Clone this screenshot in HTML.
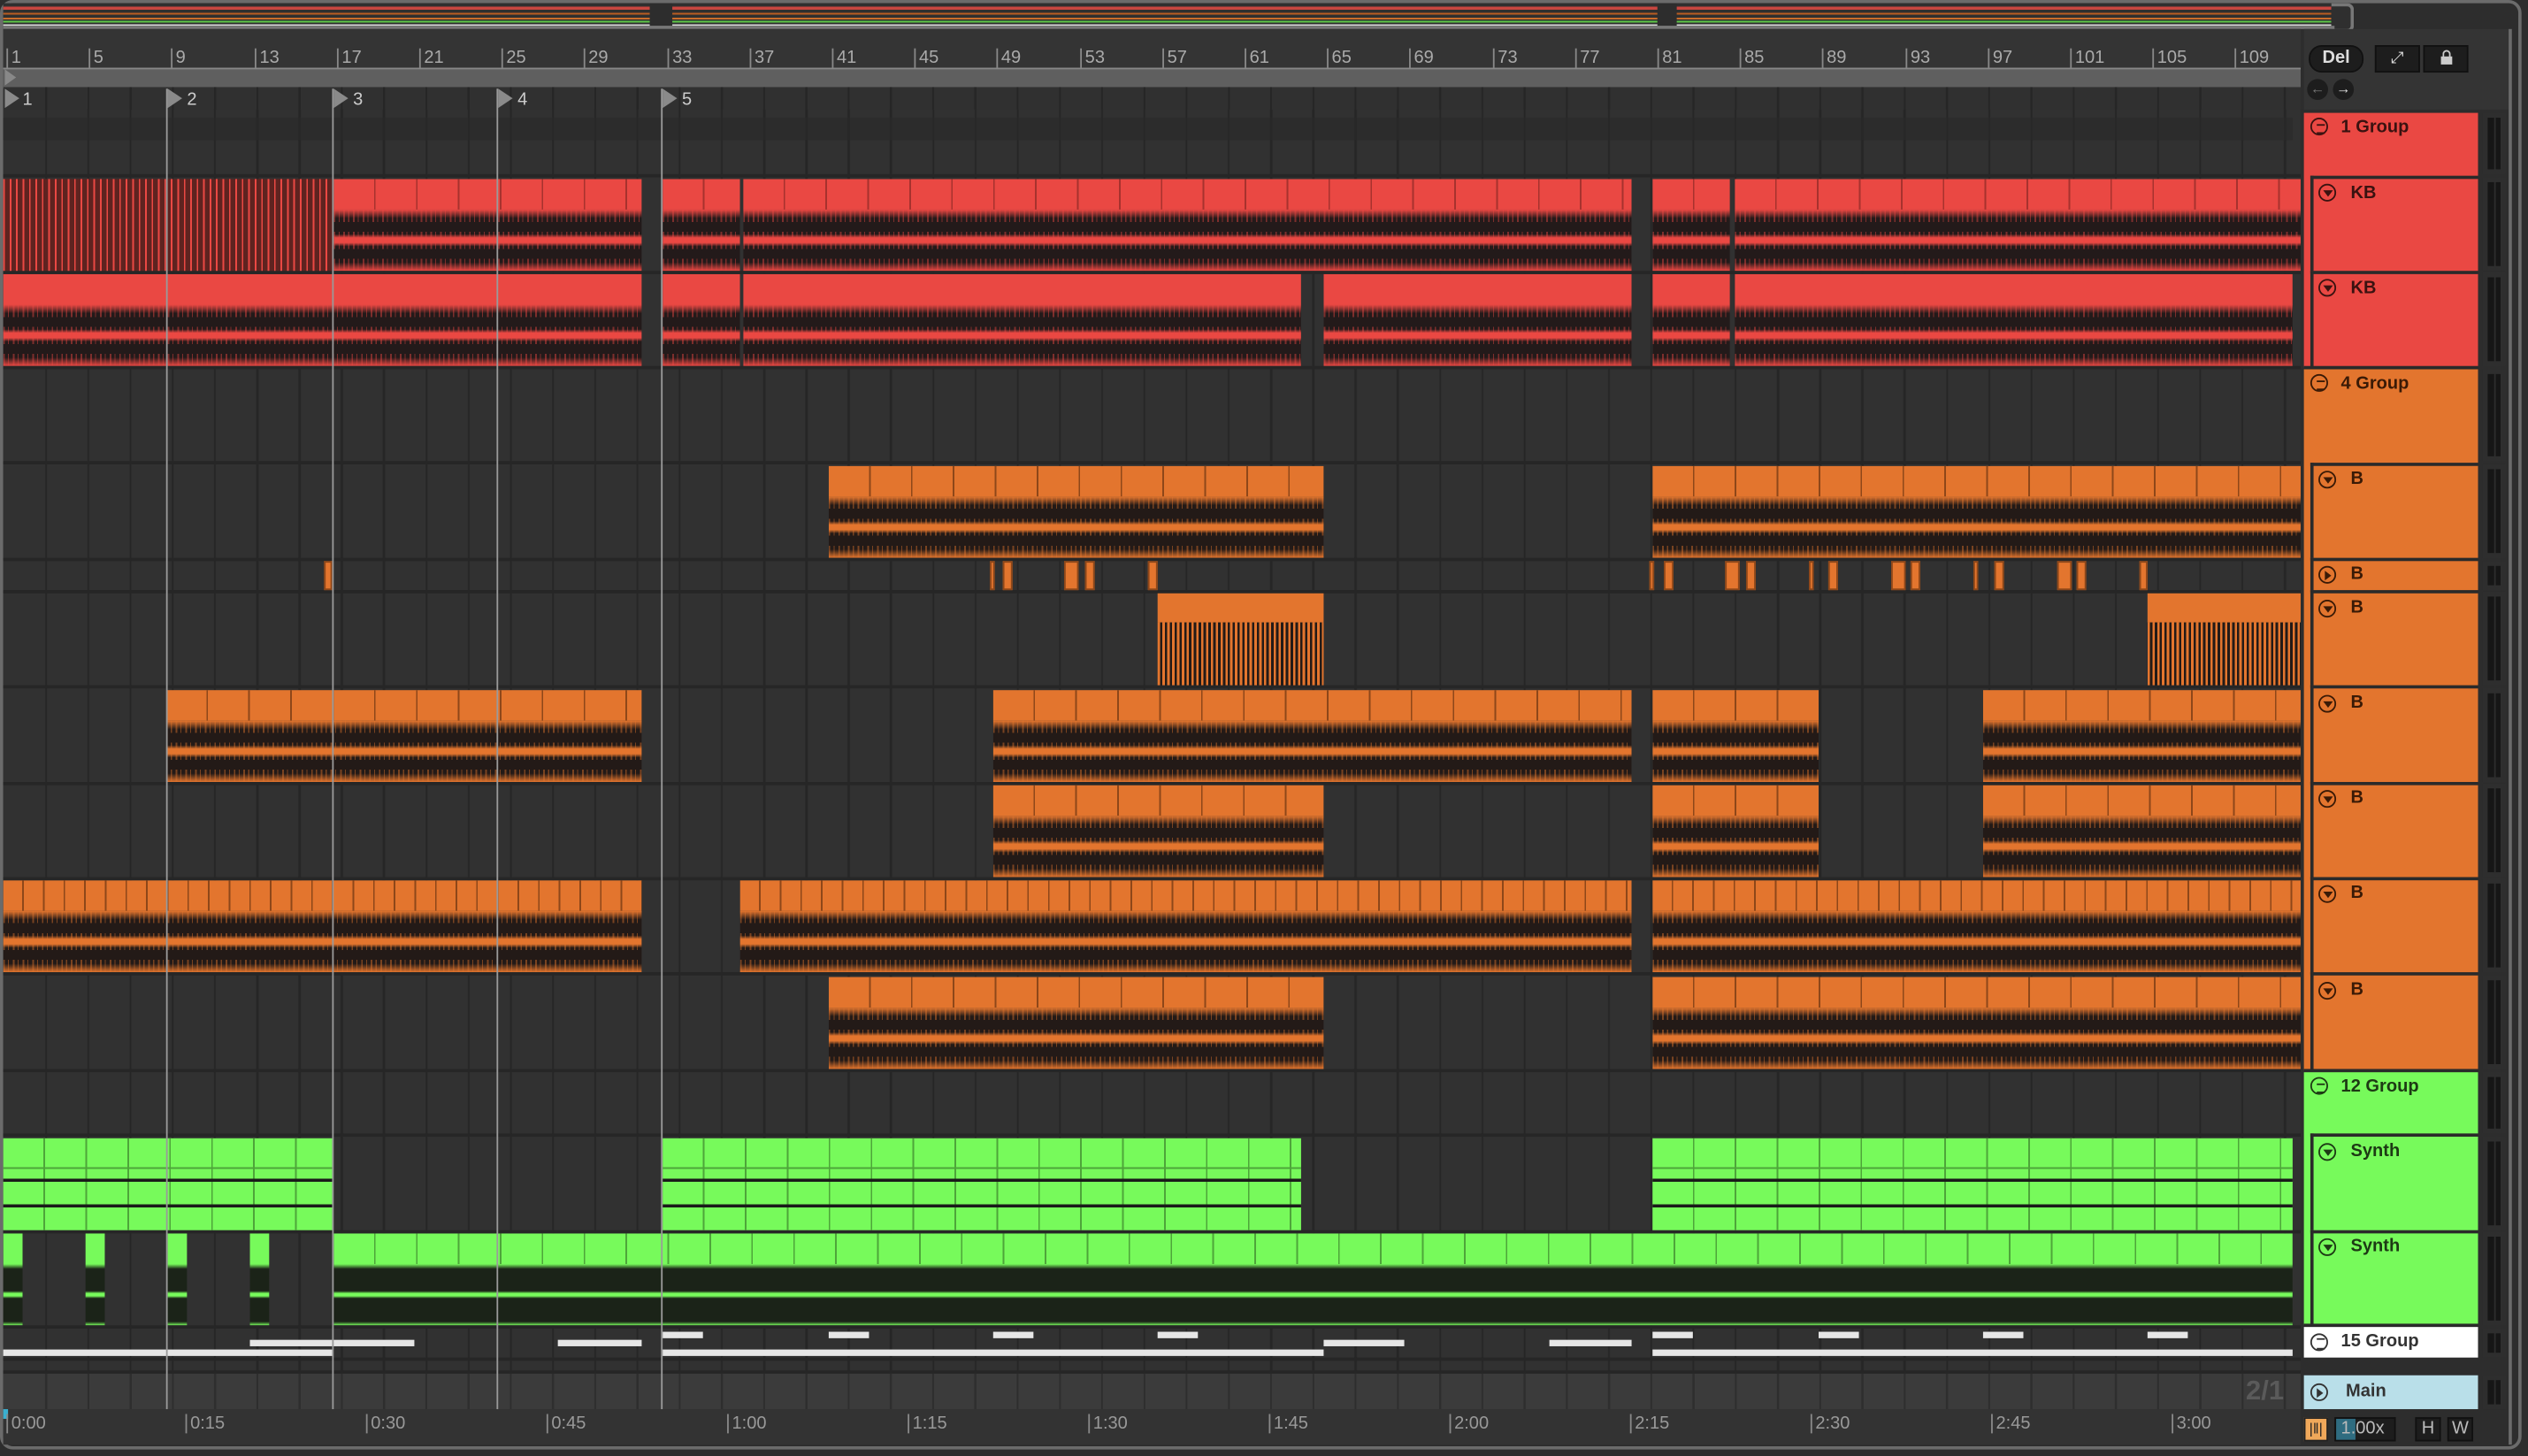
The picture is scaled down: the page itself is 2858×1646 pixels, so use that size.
<!DOCTYPE html>
<html><head><meta charset="utf-8">
<style>
html,body{margin:0;padding:0;background:#2a2a2a;width:2858px;height:1646px;overflow:hidden}
#s{position:absolute;left:0;top:0;width:1568px;height:903px;transform:scale(1.82270);transform-origin:0 0;background:#2d2d2d;font-family:"Liberation Sans",sans-serif}
#s *{white-space:nowrap}
.a{position:absolute}
.lanes{position:absolute;left:2px;top:68px;width:1425px;height:806px;background:#313131;
 background-image:repeating-linear-gradient(90deg,transparent 0 25px,#262626 25px 26.2px);background-position:1px 0}
.sep{position:absolute;left:2px;width:1425px;height:2px;background:#262626}
.row{position:absolute;left:0;width:1427px}
.c{position:absolute;top:1px;bottom:1px;overflow:hidden;box-sizing:border-box}
.c .h{position:absolute;left:0;right:0;top:0;height:33%}
.c .w{position:absolute;left:0;right:0;bottom:0;top:33%}
.c .w:after{content:"";position:absolute;left:0;right:0;top:0;bottom:0;opacity:.45}
.r .h{background:#ea4843;background-image:repeating-linear-gradient(90deg,transparent 0 25px,#a7322e 25px 26px)}
.r .w{background:linear-gradient(to bottom,#ea4843 0,#231a1a 14%,#231a1a 40%,#ea4843 46%,#ea4843 54%,#231a1a 60%,#231a1a 86%,#ea4843 100%)}
.r .w:after{background:repeating-linear-gradient(90deg,#ea4843 0 1px,transparent 1px 3px,#ea4843 3px 3.6px,transparent 3.6px 6px);-webkit-mask:linear-gradient(to bottom,#000 0 20%,transparent 20% 36%,#000 36% 64%,transparent 64% 80%,#000 80%)}
.o .h{background:#e3752e;background-image:repeating-linear-gradient(90deg,transparent 0 25px,#8e4719 25px 26px)}
.o .w{background:linear-gradient(to bottom,#e3752e 0,#231a17 14%,#231a17 40%,#e3752e 46%,#e3752e 54%,#231a17 60%,#231a17 86%,#e3752e 100%)}
.o .w:after{background:repeating-linear-gradient(90deg,#e3752e 0 1px,transparent 1px 3px,#e3752e 3px 3.6px,transparent 3.6px 6px);-webkit-mask:linear-gradient(to bottom,#000 0 20%,transparent 20% 36%,#000 36% 64%,transparent 64% 80%,#000 80%)}
.g .h{background:#77fa5b;background-image:repeating-linear-gradient(90deg,transparent 0 25px,#4ea53a 25px 26px)}
.g .w{background:linear-gradient(to bottom,#77fa5b 0,#1b2318 8%,#1b2318 44%,#77fa5b 48%,#77fa5b 52%,#1b2318 56%,#1b2318 94%,#77fa5b 100%)}
.rs{background:repeating-linear-gradient(90deg,#ea4843 0 1px,#5e2320 1px 4px)}
.os{background:repeating-linear-gradient(90deg,#e3752e 0 1.5px,#231a17 1.5px 3px);border-top:18px solid #e3752e}
.m{background:#77fa5b;background-image:linear-gradient(to bottom,transparent 0 18px,#4ea53a 18px 19px,transparent 19px 25px,#1a1a1a 25px 27px,transparent 27px 41px,#1a1a1a 41px 43px,transparent 43px),repeating-linear-gradient(90deg,transparent 0 25px,#4ea53a 25px 26px)}
.ob{position:absolute;background:#e3752e;border:1px solid #8e4719;box-sizing:border-box}
.wb{position:absolute;height:4px;background:#e6e6e6}
.rn{position:absolute;top:30px;font-size:11px;color:#aaa;border-left:1px solid #888;padding-left:2px;height:12px;line-height:12px}
.tn{position:absolute;top:877px;font-size:11px;color:#999;border-left:1px solid #888;padding-left:2px;line-height:12px}
.loc{position:absolute;top:55px;width:1px;height:820px;background:#9a9a9a}
.lt{position:absolute;top:56px;font-size:11px;color:#ccc}
.tri{position:absolute;top:55px;width:0;height:0;border-top:6px solid transparent;border-bottom:6px solid transparent;border-left:9px solid #8a8a8a}
.th{position:absolute;font-size:11px;font-weight:bold;color:#2a1210;box-sizing:border-box}
.ic{position:absolute;width:11px;height:11px;border:1.3px solid currentColor;border-radius:50%;box-sizing:border-box}
.mt{position:absolute;left:1540px;width:14px;background:#2e2e2e}
.mt:before,.mt:after{content:"";position:absolute;top:3px;bottom:3px;width:3.5px;background:#161616}
.mt:before{left:3px}.mt:after{left:7.5px}
</style></head><body><div id="s">
<div class="a" style="left:0;top:0;width:1564px;height:899px;border:2px solid #6b6b6b;border-radius:8px;box-sizing:border-box"></div>
<!-- overview -->
<div class="a" style="left:2px;top:2px;width:1444px;height:14px;background:#2f2f2f;
background-image:linear-gradient(to bottom,transparent 0 2px,#c9463f 2px 4px,transparent 4px 6px,#b85d22 6px 7px,transparent 7px 9px,#c96d2b 9px 10px,transparent 10px 11px,#5fc848 11px 12px,transparent 12px 13px,#ddd 13px 14px)"></div>
<div class="a" style="left:403px;top:2px;width:14px;height:14px;background:#2d2d2d"></div>
<div class="a" style="left:1028px;top:2px;width:12px;height:14px;background:#2d2d2d"></div>
<div class="a" style="left:1446px;top:2px;width:12px;height:14px;background:#2f2f2f;border:2px solid #777;border-left:0;border-radius:0 4px 4px 0"></div>
<div class="a" style="left:2px;top:16px;width:1446px;height:2px;background:#777"></div>
<!-- ruler -->
<div class="a" style="left:2px;top:18px;width:1425px;height:24px;background:#343434"></div>
<span class="rn" style="left:4px">1</span><span class="rn" style="left:55px">5</span><span class="rn" style="left:106px">9</span><span class="rn" style="left:158px">13</span><span class="rn" style="left:209px">17</span><span class="rn" style="left:260px">21</span><span class="rn" style="left:311px">25</span><span class="rn" style="left:362px">29</span><span class="rn" style="left:414px">33</span><span class="rn" style="left:465px">37</span><span class="rn" style="left:516px">41</span><span class="rn" style="left:567px">45</span><span class="rn" style="left:618px">49</span><span class="rn" style="left:670px">53</span><span class="rn" style="left:721px">57</span><span class="rn" style="left:772px">61</span><span class="rn" style="left:823px">65</span><span class="rn" style="left:874px">69</span><span class="rn" style="left:926px">73</span><span class="rn" style="left:977px">77</span><span class="rn" style="left:1028px">81</span><span class="rn" style="left:1079px">85</span><span class="rn" style="left:1130px">89</span><span class="rn" style="left:1182px">93</span><span class="rn" style="left:1233px">97</span><span class="rn" style="left:1284px">101</span><span class="rn" style="left:1335px">105</span><span class="rn" style="left:1386px">109</span>
<div class="a" style="left:2px;top:42px;width:1425px;height:11px;background:#5f5f5f;border-top:1px solid #888;border-bottom:1px solid #888"></div>
<div class="a" style="left:3px;top:43px;border-top:5px solid transparent;border-bottom:5px solid transparent;border-left:7px solid #888"></div>
<div class="a" style="left:2px;top:54px;width:1425px;height:14px;background:#303030;background-image:repeating-linear-gradient(90deg,transparent 0 25px,#262626 25px 26.2px);background-position:1px 0"></div>
<!-- top-right buttons -->
<div class="a" style="left:1429px;top:18px;width:127px;height:50px;background:#343434"></div>
<div class="a" style="left:1432px;top:28px;width:32px;height:15px;border-radius:8px;background:#1d1d1d;border:1px solid #111;color:#ddd;font-size:11px;font-weight:bold;text-align:center;line-height:15px">Del</div>
<div class="a" style="left:1473px;top:28px;width:26px;height:15px;background:#1d1d1d;border:1px solid #111;color:#ddd;font-size:10px;text-align:center;line-height:15px">⤢</div>
<div class="a" style="left:1503px;top:28px;width:26px;height:15px;background:#1d1d1d;border:1px solid #111"><div class="a" style="left:10px;top:6px;width:7px;height:5px;background:#ccc"></div><div class="a" style="left:11px;top:2px;width:3px;height:4px;border:1px solid #ccc;border-bottom:0;border-radius:3px 3px 0 0"></div></div>
<div class="a" style="left:1431px;top:49px;width:13px;height:13px;border-radius:50%;background:#1d1d1d;color:#777;font-size:9px;text-align:center;line-height:13px">←</div>
<div class="a" style="left:1447px;top:49px;width:13px;height:13px;border-radius:50%;background:#1d1d1d;color:#ddd;font-size:9px;text-align:center;line-height:13px">→</div>
<!-- lanes -->
<div class="lanes"></div>
<div class="sep" style="top:108px"></div><div class="sep" style="top:168px"></div><div class="sep" style="top:227px"></div><div class="sep" style="top:286px"></div><div class="sep" style="top:346px"></div><div class="sep" style="top:366px"></div><div class="sep" style="top:425px"></div><div class="sep" style="top:485px"></div><div class="sep" style="top:544px"></div><div class="sep" style="top:603px"></div><div class="sep" style="top:663px"></div><div class="sep" style="top:703px"></div><div class="sep" style="top:763px"></div><div class="sep" style="top:822px"></div><div class="sep" style="top:842px"></div><div class="sep" style="top:850px;height:2px"></div>
<div class="a" style="left:2px;top:852px;width:1425px;height:22px;background:#3b3b3b;background-image:repeating-linear-gradient(90deg,transparent 0 25px,#2e2e2e 25px 26.2px);background-position:1px 0"></div>
<div class="a" style="left:2px;top:73px;width:1420px;height:14px;background:#2a2a2a;opacity:.6"></div>
<!-- KB 1 -->
<div class="row" style="top:110px;height:59px">
<div class="c rs" style="left:2px;width:204px"></div>
<div class="c r" style="left:207px;width:191px"><div class="h"></div><div class="w"></div></div>
<div class="c r" style="left:411px;width:48px"><div class="h"></div><div class="w"></div></div>
<div class="c r" style="left:461px;width:551px"><div class="h"></div><div class="w"></div></div>
<div class="c r" style="left:1025px;width:48px"><div class="h"></div><div class="w"></div></div>
<div class="c r" style="left:1076px;width:351px"><div class="h"></div><div class="w"></div></div>
</div>
<!-- KB 2 -->
<div class="row" style="top:169px;height:59px">
<div class="c r" style="left:2px;width:396px"><div class="h" style="background-image:none"></div><div class="w"></div></div>
<div class="c r" style="left:411px;width:48px"><div class="h" style="background-image:none"></div><div class="w"></div></div>
<div class="c r" style="left:461px;width:346px"><div class="h" style="background-image:none"></div><div class="w"></div></div>
<div class="c r" style="left:821px;width:191px"><div class="h" style="background-image:none"></div><div class="w"></div></div>
<div class="c r" style="left:1025px;width:48px"><div class="h" style="background-image:none"></div><div class="w"></div></div>
<div class="c r" style="left:1076px;width:346px"><div class="h" style="background-image:none"></div><div class="w"></div></div>
</div>
<!-- B rows -->
<div class="row" style="top:288px;height:59px">
<div class="c o" style="left:514px;width:307px"><div class="h"></div><div class="w"></div></div>
<div class="c o" style="left:1025px;width:402px"><div class="h"></div><div class="w"></div></div>
</div>
<div class="row" style="top:348px;height:18px">
<div class="ob" style="left:201px;top:0;width:5px;height:18px"></div>
<div class="ob" style="left:614px;top:0;width:3px;height:18px"></div><div class="ob" style="left:622px;top:0;width:6px;height:18px"></div>
<div class="ob" style="left:660px;top:0;width:9px;height:18px"></div><div class="ob" style="left:673px;top:0;width:6px;height:18px"></div>
<div class="ob" style="left:712px;top:0;width:6px;height:18px"></div>
<div class="ob" style="left:1023px;top:0;width:3px;height:18px"></div><div class="ob" style="left:1032px;top:0;width:6px;height:18px"></div>
<div class="ob" style="left:1070px;top:0;width:9px;height:18px"></div><div class="ob" style="left:1083px;top:0;width:6px;height:18px"></div>
<div class="ob" style="left:1122px;top:0;width:3px;height:18px"></div><div class="ob" style="left:1134px;top:0;width:6px;height:18px"></div>
<div class="ob" style="left:1173px;top:0;width:9px;height:18px"></div><div class="ob" style="left:1185px;top:0;width:6px;height:18px"></div>
<div class="ob" style="left:1224px;top:0;width:3px;height:18px"></div><div class="ob" style="left:1237px;top:0;width:6px;height:18px"></div>
<div class="ob" style="left:1276px;top:0;width:9px;height:18px"></div><div class="ob" style="left:1288px;top:0;width:6px;height:18px"></div>
<div class="ob" style="left:1327px;top:0;width:5px;height:18px"></div>
</div>
<div class="row" style="top:367px;height:59px">
<div class="c os" style="left:718px;width:103px"></div>
<div class="c os" style="left:1332px;width:95px"></div>
</div>
<div class="row" style="top:427px;height:59px">
<div class="c o" style="left:103px;width:295px"><div class="h"></div><div class="w"></div></div>
<div class="c o" style="left:616px;width:396px"><div class="h"></div><div class="w"></div></div>
<div class="c o" style="left:1025px;width:103px"><div class="h"></div><div class="w"></div></div>
<div class="c o" style="left:1230px;width:197px"><div class="h"></div><div class="w"></div></div>
</div>
<div class="row" style="top:486px;height:59px">
<div class="c o" style="left:616px;width:205px"><div class="h"></div><div class="w"></div></div>
<div class="c o" style="left:1025px;width:103px"><div class="h"></div><div class="w"></div></div>
<div class="c o" style="left:1230px;width:197px"><div class="h"></div><div class="w"></div></div>
</div>
<div class="row" style="top:545px;height:59px">
<div class="c o" style="left:2px;width:396px"><div class="h" style="background-image:repeating-linear-gradient(90deg,transparent 0 11.8px,#8e4719 11.8px 12.8px)"></div><div class="w"></div></div>
<div class="c o" style="left:459px;width:553px"><div class="h" style="background-image:repeating-linear-gradient(90deg,transparent 0 11.8px,#8e4719 11.8px 12.8px)"></div><div class="w"></div></div>
<div class="c o" style="left:1025px;width:402px"><div class="h" style="background-image:repeating-linear-gradient(90deg,transparent 0 11.8px,#8e4719 11.8px 12.8px)"></div><div class="w"></div></div>
</div>
<div class="row" style="top:605px;height:59px">
<div class="c o" style="left:514px;width:307px"><div class="h"></div><div class="w"></div></div>
<div class="c o" style="left:1025px;width:402px"><div class="h"></div><div class="w"></div></div>
</div>
<!-- Synth midi -->
<div class="row" style="top:705px;height:59px">
<div class="c m" style="left:2px;width:204px"></div>
<div class="c m" style="left:411px;width:396px"></div>
<div class="c m" style="left:1025px;width:397px"></div>
</div>
<!-- Synth audio -->
<div class="row" style="top:764px;height:59px">
<div class="c g" style="left:2px;width:12px"><div class="h"></div><div class="w"></div></div>
<div class="c g" style="left:53px;width:12px"><div class="h"></div><div class="w"></div></div>
<div class="c g" style="left:104px;width:12px"><div class="h"></div><div class="w"></div></div>
<div class="c g" style="left:155px;width:12px"><div class="h"></div><div class="w"></div></div>
<div class="c g" style="left:207px;width:1215px"><div class="h"></div><div class="w"></div></div>
</div>
<!-- 15 group white bars -->
<div class="wb" style="left:2px;top:837px;width:204px"></div>
<div class="wb" style="left:155px;top:831px;width:102px"></div>
<div class="wb" style="left:346px;top:831px;width:52px"></div>
<div class="wb" style="left:411px;top:826px;width:25px"></div>
<div class="wb" style="left:411px;top:837px;width:410px"></div>
<div class="wb" style="left:514px;top:826px;width:25px"></div>
<div class="wb" style="left:616px;top:826px;width:25px"></div>
<div class="wb" style="left:718px;top:826px;width:25px"></div>
<div class="wb" style="left:821px;top:831px;width:50px"></div>
<div class="wb" style="left:961px;top:831px;width:51px"></div>
<div class="wb" style="left:1025px;top:826px;width:25px"></div>
<div class="wb" style="left:1025px;top:837px;width:397px"></div>
<div class="wb" style="left:1128px;top:826px;width:25px"></div>
<div class="wb" style="left:1230px;top:826px;width:25px"></div>
<div class="wb" style="left:1332px;top:826px;width:25px"></div>
<!-- locators -->
<div class="loc" style="left:103px"></div><div class="loc" style="left:206px"></div><div class="loc" style="left:308px"></div><div class="loc" style="left:410px"></div>
<div class="tri" style="left:3px"></div><span class="lt" style="left:14px">1</span>
<div class="tri" style="left:104px"></div><span class="lt" style="left:116px">2</span>
<div class="tri" style="left:207px"></div><span class="lt" style="left:219px">3</span>
<div class="tri" style="left:309px"></div><span class="lt" style="left:321px">4</span>
<div class="tri" style="left:411px"></div><span class="lt" style="left:423px">5</span>
<span class="a" style="left:1393px;top:853px;font-size:17px;font-weight:bold;color:#5a5a5a">2/1</span>
<!-- time ruler -->
<div class="a" style="left:2px;top:874px;width:1425px;height:22px;background:#333"></div>
<div class="a" style="left:2px;top:874px;width:3px;height:6px;background:#3ab0d0"></div>
<span class="tn" style="left:4px">0:00</span><span class="tn" style="left:115px">0:15</span><span class="tn" style="left:227px">0:30</span><span class="tn" style="left:339px">0:45</span><span class="tn" style="left:451px">1:00</span><span class="tn" style="left:563px">1:15</span><span class="tn" style="left:675px">1:30</span><span class="tn" style="left:787px">1:45</span><span class="tn" style="left:899px">2:00</span><span class="tn" style="left:1011px">2:15</span><span class="tn" style="left:1123px">2:30</span><span class="tn" style="left:1235px">2:45</span><span class="tn" style="left:1347px">3:00</span>
<!-- right panel -->
<div class="a" style="left:1427px;top:68px;width:129px;height:829px;background:#2d2d2d"></div>
<div class="a" style="left:1429px;top:70px;width:108px;height:158px;background:#ea4843"></div>
<div class="a" style="left:1429px;top:229px;width:108px;height:435px;background:#e3752e"></div>
<div class="a" style="left:1429px;top:665px;width:108px;height:157px;background:#77fa5b"></div>
<div class="a" style="left:1429px;top:823px;width:108px;height:19px;background:#fff"></div>
<div class="a" style="left:1429px;top:853px;width:108px;height:21px;background:#b9dfe9"></div>
<div class="th" style="left:1433px;top:109px;width:104px;height:60px;background:#ea4843;border-left:2px solid #2a2a2a;border-top:2px solid #2a2a2a"></div>
<div class="th" style="left:1433px;top:168px;width:104px;height:60px;background:#ea4843;border-left:2px solid #2a2a2a;border-top:2px solid #2a2a2a"></div>
<div class="th" style="left:1433px;top:287px;width:104px;height:60px;background:#e3752e;border-left:2px solid #2a2a2a;border-top:2px solid #2a2a2a"></div>
<div class="th" style="left:1433px;top:346px;width:104px;height:21px;background:#e3752e;border-left:2px solid #2a2a2a;border-top:2px solid #2a2a2a"></div>
<div class="th" style="left:1433px;top:366px;width:104px;height:60px;background:#e3752e;border-left:2px solid #2a2a2a;border-top:2px solid #2a2a2a"></div>
<div class="th" style="left:1433px;top:425px;width:104px;height:61px;background:#e3752e;border-left:2px solid #2a2a2a;border-top:2px solid #2a2a2a"></div>
<div class="th" style="left:1433px;top:485px;width:104px;height:60px;background:#e3752e;border-left:2px solid #2a2a2a;border-top:2px solid #2a2a2a"></div>
<div class="th" style="left:1433px;top:544px;width:104px;height:60px;background:#e3752e;border-left:2px solid #2a2a2a;border-top:2px solid #2a2a2a"></div>
<div class="th" style="left:1433px;top:603px;width:104px;height:61px;background:#e3752e;border-left:2px solid #2a2a2a;border-top:2px solid #2a2a2a"></div>
<div class="th" style="left:1433px;top:703px;width:104px;height:61px;background:#77fa5b;border-left:2px solid #2a2a2a;border-top:2px solid #2a2a2a"></div>
<div class="th" style="left:1433px;top:763px;width:104px;height:59px;background:#77fa5b;border-left:2px solid #2a2a2a;border-top:2px solid #2a2a2a"></div>
<div class="a" style="left:1429px;top:227px;width:108px;height:2px;background:#2a2a2a"></div>
<div class="a" style="left:1429px;top:663px;width:108px;height:2px;background:#2a2a2a"></div>
<div class="a" style="left:1429px;top:821px;width:108px;height:2px;background:#2a2a2a"></div>
<!-- labels -->
<div class="a" style="left:0;top:0;color:#3a1210;font-size:11px;font-weight:bold">
<span class="ic" style="left:1433px;top:73px"><span class="a" style="left:2.5px;top:2.5px;width:5px;height:4px;border-top:1px solid;border-bottom:1px solid"></span></span><span class="a" style="left:1452px;top:73px">1 Group</span>
<span class="ic" style="left:1438px;top:114px"><span class="a" style="left:1.6px;top:3px;border-left:3px solid transparent;border-right:3px solid transparent;border-top:4px solid #3a1210"></span></span><span class="a" style="left:1458px;top:114px">KB</span>
<span class="ic" style="left:1438px;top:173px"><span class="a" style="left:1.6px;top:3px;border-left:3px solid transparent;border-right:3px solid transparent;border-top:4px solid #3a1210"></span></span><span class="a" style="left:1458px;top:173px">KB</span>
</div>
<div class="a" style="left:0;top:0;color:#3a1a06;font-size:11px;font-weight:bold">
<span class="ic" style="left:1433px;top:232px"><span class="a" style="left:2.5px;top:2.5px;width:5px;height:4px;border-top:1px solid;border-bottom:1px solid"></span></span><span class="a" style="left:1452px;top:232px">4 Group</span>
<span class="ic" style="left:1438px;top:292px"><span class="a" style="left:1.6px;top:3px;border-left:3px solid transparent;border-right:3px solid transparent;border-top:4px solid #3a1a06"></span></span><span class="a" style="left:1458px;top:291px">B</span>
<span class="ic" style="left:1438px;top:351px"><span class="a" style="left:3px;top:1.6px;border-top:3px solid transparent;border-bottom:3px solid transparent;border-left:4px solid #3a1a06"></span></span><span class="a" style="left:1458px;top:350px">B</span>
<span class="ic" style="left:1438px;top:372px"><span class="a" style="left:1.6px;top:3px;border-left:3px solid transparent;border-right:3px solid transparent;border-top:4px solid #3a1a06"></span></span><span class="a" style="left:1458px;top:371px">B</span>
<span class="ic" style="left:1438px;top:431px"><span class="a" style="left:1.6px;top:3px;border-left:3px solid transparent;border-right:3px solid transparent;border-top:4px solid #3a1a06"></span></span><span class="a" style="left:1458px;top:430px">B</span>
<span class="ic" style="left:1438px;top:490px"><span class="a" style="left:1.6px;top:3px;border-left:3px solid transparent;border-right:3px solid transparent;border-top:4px solid #3a1a06"></span></span><span class="a" style="left:1458px;top:489px">B</span>
<span class="ic" style="left:1438px;top:549px"><span class="a" style="left:1.6px;top:3px;border-left:3px solid transparent;border-right:3px solid transparent;border-top:4px solid #3a1a06"></span></span><span class="a" style="left:1458px;top:548px">B</span>
<span class="ic" style="left:1438px;top:609px"><span class="a" style="left:1.6px;top:3px;border-left:3px solid transparent;border-right:3px solid transparent;border-top:4px solid #3a1a06"></span></span><span class="a" style="left:1458px;top:608px">B</span>
</div>
<div class="a" style="left:0;top:0;color:#1d3a14;font-size:11px;font-weight:bold">
<span class="ic" style="left:1433px;top:668px"><span class="a" style="left:2.5px;top:2.5px;width:5px;height:4px;border-top:1px solid;border-bottom:1px solid"></span></span><span class="a" style="left:1452px;top:668px">12 Group</span>
<span class="ic" style="left:1438px;top:709px"><span class="a" style="left:1.6px;top:3px;border-left:3px solid transparent;border-right:3px solid transparent;border-top:4px solid #1d3a14"></span></span><span class="a" style="left:1458px;top:708px">Synth</span>
<span class="ic" style="left:1438px;top:768px"><span class="a" style="left:1.6px;top:3px;border-left:3px solid transparent;border-right:3px solid transparent;border-top:4px solid #1d3a14"></span></span><span class="a" style="left:1458px;top:767px">Synth</span>
</div>
<div class="a" style="left:0;top:0;color:#333;font-size:11px;font-weight:bold">
<span class="ic" style="left:1433px;top:827px"><span class="a" style="left:2.5px;top:2px;width:5px;height:5px;border-top:1px solid;border-bottom:1px solid"></span></span><span class="a" style="left:1452px;top:826px">15 Group</span>
<span class="ic" style="left:1433px;top:858px"><span class="a" style="left:3px;top:1.6px;border-top:3px solid transparent;border-bottom:3px solid transparent;border-left:4px solid #333"></span></span><span class="a" style="left:1455px;top:857px">Main</span>
</div>
<!-- meters -->
<div class="mt" style="top:70px;height:38px"></div><div class="mt" style="top:110px;height:58px"></div><div class="mt" style="top:169px;height:58px"></div><div class="mt" style="top:229px;height:57px"></div><div class="mt" style="top:288px;height:58px"></div><div class="mt" style="top:348px;height:18px"></div><div class="mt" style="top:367px;height:58px"></div><div class="mt" style="top:427px;height:58px"></div><div class="mt" style="top:486px;height:58px"></div><div class="mt" style="top:545px;height:58px"></div><div class="mt" style="top:605px;height:58px"></div><div class="mt" style="top:665px;height:38px"></div><div class="mt" style="top:705px;height:58px"></div><div class="mt" style="top:764px;height:58px"></div><div class="mt" style="top:824px;height:18px"></div><div class="mt" style="top:853px;height:21px"></div>
<div class="a" style="left:1556px;top:18px;width:2px;height:878px;background:#6b6b6b"></div>
<!-- bottom controls -->
<div class="a" style="left:1429px;top:879px;width:15px;height:15px;background:#f0a85a;border:1px solid #222;box-sizing:border-box;color:#222;font-size:9px;text-align:center;line-height:13px">|‖|</div>
<div class="a" style="left:1448px;top:879px;width:38px;height:15px;background:#1d1d1d;border:1px solid #111;box-sizing:border-box"><div class="a" style="left:0;top:0;width:12px;height:13px;background:#2f6c80"></div><span class="a" style="left:3px;top:0;font-size:11px;color:#bbb;line-height:13px">1.00x</span></div>
<div class="a" style="left:1498px;top:879px;width:16px;height:15px;background:#1d1d1d;border:1px solid #111;box-sizing:border-box;color:#bbb;font-size:11px;text-align:center;line-height:13px">H</div>
<div class="a" style="left:1518px;top:879px;width:16px;height:15px;background:#1d1d1d;border:1px solid #111;box-sizing:border-box;color:#bbb;font-size:11px;text-align:center;line-height:13px">W</div>
</div></body></html>
